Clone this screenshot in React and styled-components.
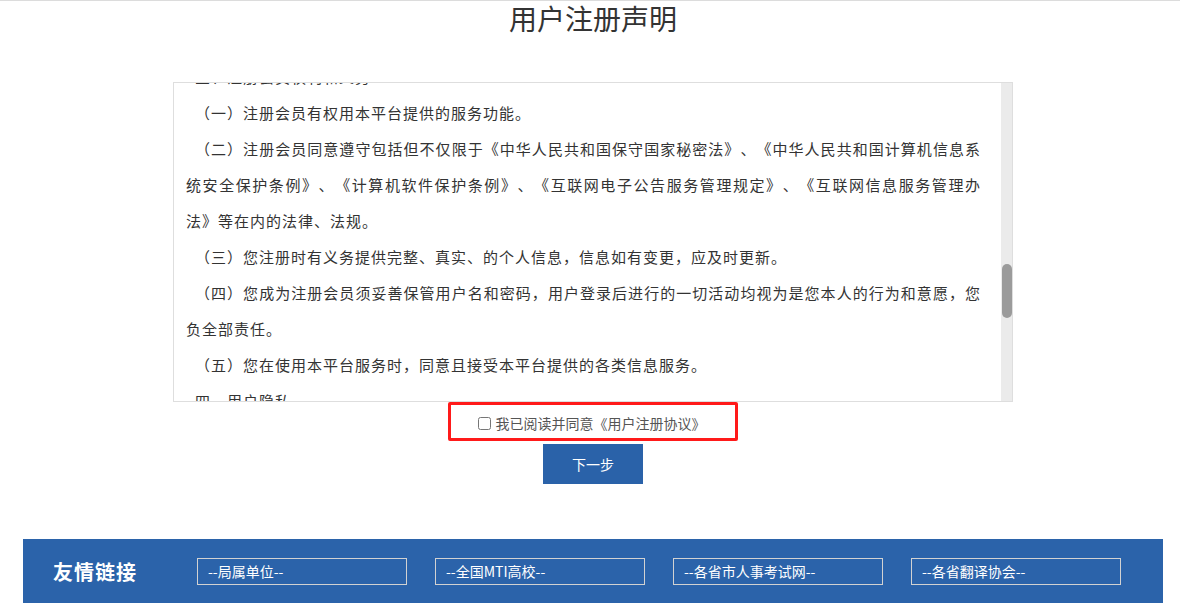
import React, { useLayoutEffect, useRef, useState } from "react";
import styled, { createGlobalStyle } from "styled-components";

const Global = createGlobalStyle`
  html, body { margin: 0; padding: 0; background: #fff; }
  body {
    border-top: 1px solid #dcdcdc;
    font-family: "Noto Sans CJK SC", "Noto Sans", sans-serif;
    color: #333;
    text-spacing-trim: space-all;
  }
  * { box-sizing: border-box; }
`;

const Page = styled.div`
  width: 1140px;
  margin-left: 23px;
  display: flex;
  flex-direction: column;
  align-items: center;
`;

const Title = styled.h1`
  margin: 0;
  font-size: 28px;
  font-weight: 400;
  line-height: 34px;
  color: #333;
`;

const ScrollFrame = styled.div`
  margin-top: 47px;
  width: 840px;
  height: 320px;
  border: 1px solid #dedede;
  display: flex;
`;

const ScrollContent = styled.div`
  position: relative;
  flex: 1;
  overflow: hidden;
  padding: 0 20px 0 12px;
`;

const ScrollTrack = styled.div`
  width: 11px;
  flex: none;
  background: #ebebeb;
  display: flex;
  flex-direction: column;
  align-items: center;
`;

const ScrollThumb = styled.div`
  width: 10px;
  border-radius: 5px;
  background: #9b9b9b;
`;

const Para = styled.p`
  margin: 0;
  font-size: 15px;
  letter-spacing: 1px;
  line-height: 36px;
  text-indent: 9px;
  text-align: justify;
  text-spacing-trim: space-all;
  color: #333;
`;

const AgreeBox = styled.label`
  width: 290px;
  height: 39px;
  border: 3px solid #ff1a1a;
  border-radius: 2px;
  display: flex;
  align-items: center;
  justify-content: center;
  gap: 5px;
  padding: 3px 3px 0 0;
  font-size: 14px;
  color: #555;
  cursor: pointer;
`;

const Check = styled.input`
  margin: 0;
  width: 13px;
  height: 13px;
`;

const NextButton = styled.button`
  margin-top: 3px;
  width: 100px;
  height: 40px;
  border: none;
  background: #2a62a9;
  color: #fff;
  font-family: inherit;
  font-size: 14px;
  cursor: pointer;
`;

const Footer = styled.footer`
  margin-top: 55px;
  width: 1140px;
  height: 64px;
  background: #2b63aa;
  display: flex;
  align-items: center;
  padding-left: 30px;
`;

const FooterTitle = styled.div`
  width: 144px;
  font-size: 20px;
  font-weight: 700;
  color: #fff;
  letter-spacing: 1px;
`;

const LinkList = styled.div`
  display: flex;
  gap: 28px;
`;

const LinkSelect = styled.div`
  width: 210px;
  height: 27px;
  border: 1px solid #d2d2d2;
  color: #fff;
  font-size: 14px;
  line-height: 25px;
  padding-left: 10px;
`;

const before = [
  "一、总则",
  "（一）本平台的所有权和运营权归本单位所有。用户在注册之前，应当仔细阅读本声明，并同意遵守本声明后方可成为注册会员。一旦注册成功，则用户与本平台之间自动形成协议关系，用户应当受本声明的约束。",
  "（二）本平台有权根据需要不时地制订、修改本声明及各类规则，并以网站公示的方式进行公告。变更后的声明和规则一经在网站公布后，立即自动生效。如您不同意相关变更，应当立即停止使用本平台服务。",
  "（三）用户注册成功后，本平台将给予每个用户一个用户帐号及相应的密码，该用户帐号和密码由用户负责保管；用户应当对以其用户帐号进行的所有活动和事件负法律责任。",
  "（四）用户在使用本平台提供的各项服务之前，应仔细阅读本服务协议。如用户不同意本服务协议及随时对其的修改，用户可以主动取消本平台提供的服务；用户一旦使用本平台服务，即视为用户已了解并完全同意本服务协议各项内容，包括本平台对服务协议随时所做的任何修改，并成为本平台用户。",
  "（五）本平台所提供的各项服务的所有权和运作权归本单位所有，用户同意所有注册协议条款并完成注册程序，才能成为本平台的正式用户。",
  "（六）本声明的解释权及修改权归本平台所有。",
  "二、注册会员资格",
  "（一）注册会员应当是具有完全民事行为能力的自然人，或者是具有合法经营资格的实体组织。",
  "（二）注册会员在注册时应当按照注册页面的提示准确填写个人资料，并保证所提供的资料真实、准确、完整、合法有效。注册资料如有变动的，应及时更新。",
  "（三）若注册会员提供任何违法、不道德或本平台认为不适合在本平台展示的资料，或者本平台有理由怀疑注册会员的资料属于程序或恶意操作，本平台有权暂停或终止该会员的帐号，并拒绝其于现在和未来使用本平台服务之全部或任何部分。",
  "（四）本平台有权对注册会员的资格进行审核，对于不符合条件的用户，本平台有权拒绝其注册申请或取消其会员资格。",
  "（五）注册会员不得将其帐号、密码转让、出借或以其他方式提供给他人使用。如发现他人未经授权使用其帐号或存在其他安全漏洞的情况，应立即通知本平台。",
  "（六）注册会员应当妥善保管本人的各项资料，因注册会员自身原因导致的资料泄露、遗失等后果，由注册会员自行承担。",
  "（七）注册会员在使用本平台服务过程中，必须遵循国家的有关法律法规，不得利用本平台发布、传播任何违法或者违反社会公德的信息。",
  "（八）注册会员资格仅限本人使用，不得转让。",
  "三、注册会员权利和义务",
];

const visible = [
  "（一）注册会员有权用本平台提供的服务功能。",
  "（二）注册会员同意遵守包括但不仅限于《中华人民共和国保守国家秘密法》、《中华人民共和国计算机信息系统安全保护条例》、《计算机软件保护条例》、《互联网电子公告服务管理规定》、《互联网信息服务管理办法》等在内的法律、法规。",
  "（三）您注册时有义务提供完整、真实、的个人信息，信息如有变更，应及时更新。",
  "（四）您成为注册会员须妥善保管用户名和密码，用户登录后进行的一切活动均视为是您本人的行为和意愿，您负全部责任。",
  "（五）您在使用本平台服务时，同意且接受本平台提供的各类信息服务。",
];

const after = [
  "四、用户隐私",
  "（一）本平台尊重并保护所有注册会员的个人隐私权。为了给您提供更准确、更有个性化的服务，本平台会按照本声明的规定使用和披露您的个人信息。",
  "（二）除法律法规规定的情形外，未经注册会员许可，本平台不会向第三方公开、透露注册会员的个人信息。",
  "（三）本平台采用行业标准惯例以保护您的个人资料，但鉴于技术限制，本平台不能确保您的全部私人通讯及其他个人资料不会通过本声明中未列明的途径泄露出去。",
  "（四）在以下情况下，本平台可以披露您的个人信息：事先获得您的明确授权；根据有关的法律法规要求；按照相关政府主管部门的要求；为维护社会公众的利益。",
  "五、免责声明",
  "（一）因不可抗力或本平台不能控制的原因造成的服务中断或其他缺陷，本平台不承担任何责任。",
  "（二）用户因违反本声明或相关法律法规而产生的一切后果，由用户自行承担。",
  "（三）本声明未涉及的问题参见国家有关法律法规，当本声明与国家法律法规冲突时，以国家法律法规为准。",
  "（四）本声明自发布之日起施行。",
  "（五）本声明的最终解释权归本平台所有。",
];

const links = ["--局属单位--", "--全国MTI高校--", "--各省市人事考试网--", "--各省翻译协会--"];

export default function App() {
  const scrollRef = useRef(null);
  const targetRef = useRef(null);
  const [thumb, setThumb] = useState({ top: 185, height: 52 });

  useLayoutEffect(() => {
    const el = scrollRef.current;
    const target = targetRef.current;
    if (!el || !target) return;
    el.scrollTop = target.offsetTop - 12;
    const ch = el.clientHeight;
    const sh = el.scrollHeight;
    const h = Math.max(20, Math.round((ch * ch) / sh));
    const maxTop = ch - h;
    const top = Math.round((el.scrollTop / Math.max(1, sh - ch)) * maxTop);
    setThumb({ top, height: h });
  }, []);

  return (
    <>
      <Global />
      <Page>
        <Title>用户注册声明</Title>
        <ScrollFrame>
          <ScrollContent ref={scrollRef}>
            {before.map((t, i) => (
              <Para key={"b" + i}>{t}</Para>
            ))}
            {visible.map((t, i) => (
              <Para key={"v" + i} ref={i === 0 ? targetRef : undefined}>
                {t}
              </Para>
            ))}
            {after.map((t, i) => (
              <Para key={"a" + i}>{t}</Para>
            ))}
          </ScrollContent>
          <ScrollTrack>
            <ScrollThumb style={{ marginTop: thumb.top, height: thumb.height }} />
          </ScrollTrack>
        </ScrollFrame>
        <AgreeBox>
          <Check type="checkbox" />
          <span>我已阅读并同意《用户注册协议》</span>
        </AgreeBox>
        <NextButton type="button">下一步</NextButton>
        <Footer>
          <FooterTitle>友情链接</FooterTitle>
          <LinkList>
            {links.map((l) => (
              <LinkSelect key={l}>{l}</LinkSelect>
            ))}
          </LinkList>
        </Footer>
      </Page>
    </>
  );
}
